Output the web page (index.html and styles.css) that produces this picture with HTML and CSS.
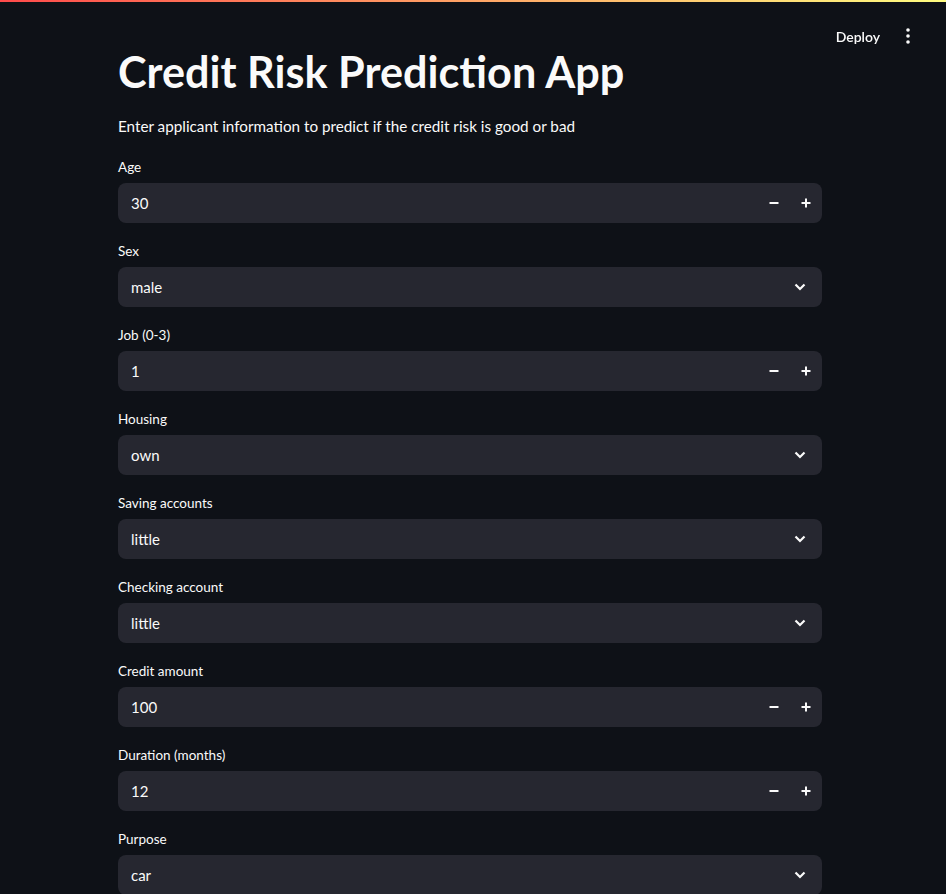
FILE: index.html
```html
<!DOCTYPE html>
<html>
<head>
<meta charset="utf-8">
<link rel="stylesheet" href="styles.css">
</head>
<body>
<div class="topbar"></div>
<header class="header">
  <span class="deploy">Deploy</span>
  <span class="kebab"><svg width="4" height="16" viewBox="0 0 4 16"><circle cx="2" cy="2" r="1.8" fill="#fafafa"/><circle cx="2" cy="8" r="1.8" fill="#fafafa"/><circle cx="2" cy="14" r="1.8" fill="#fafafa"/></svg></span>
</header>
<main class="main">
  <h1 class="title">Credit Risk Prediction App</h1>
  <p class="subtitle">Enter applicant information to predict if the credit risk is good or bad</p>

  <div class="field">
    <label class="label">Age</label>
    <div class="box"><span class="value">30</span><span class="steps"><span class="step"><svg width="10" height="10" viewBox="0 0 10 10"><path d="M0.5 5h9" stroke="#fafafa" stroke-width="2"/></svg></span><span class="step"><svg width="10" height="10" viewBox="0 0 10 10"><path d="M0.5 5h9M5 0.5v9" stroke="#fafafa" stroke-width="2"/></svg></span></span></div>
  </div>
  <div class="field">
    <label class="label">Sex</label>
    <div class="box"><span class="value">male</span><span class="chev"><svg width="12" height="8" viewBox="0 0 12 8"><path d="M1.5 1.5l4.5 4.5 4.5-4.5" stroke="#fafafa" stroke-width="2.2" fill="none"/></svg></span></div>
  </div>
  <div class="field">
    <label class="label">Job (0-3)</label>
    <div class="box"><span class="value">1</span><span class="steps"><span class="step"><svg width="10" height="10" viewBox="0 0 10 10"><path d="M0.5 5h9" stroke="#fafafa" stroke-width="2"/></svg></span><span class="step"><svg width="10" height="10" viewBox="0 0 10 10"><path d="M0.5 5h9M5 0.5v9" stroke="#fafafa" stroke-width="2"/></svg></span></span></div>
  </div>
  <div class="field">
    <label class="label">Housing</label>
    <div class="box"><span class="value">own</span><span class="chev"><svg width="12" height="8" viewBox="0 0 12 8"><path d="M1.5 1.5l4.5 4.5 4.5-4.5" stroke="#fafafa" stroke-width="2.2" fill="none"/></svg></span></div>
  </div>
  <div class="field">
    <label class="label">Saving accounts</label>
    <div class="box"><span class="value">little</span><span class="chev"><svg width="12" height="8" viewBox="0 0 12 8"><path d="M1.5 1.5l4.5 4.5 4.5-4.5" stroke="#fafafa" stroke-width="2.2" fill="none"/></svg></span></div>
  </div>
  <div class="field">
    <label class="label">Checking account</label>
    <div class="box"><span class="value">little</span><span class="chev"><svg width="12" height="8" viewBox="0 0 12 8"><path d="M1.5 1.5l4.5 4.5 4.5-4.5" stroke="#fafafa" stroke-width="2.2" fill="none"/></svg></span></div>
  </div>
  <div class="field">
    <label class="label">Credit amount</label>
    <div class="box"><span class="value">100</span><span class="steps"><span class="step"><svg width="10" height="10" viewBox="0 0 10 10"><path d="M0.5 5h9" stroke="#fafafa" stroke-width="2"/></svg></span><span class="step"><svg width="10" height="10" viewBox="0 0 10 10"><path d="M0.5 5h9M5 0.5v9" stroke="#fafafa" stroke-width="2"/></svg></span></span></div>
  </div>
  <div class="field">
    <label class="label">Duration (months)</label>
    <div class="box"><span class="value">12</span><span class="steps"><span class="step"><svg width="10" height="10" viewBox="0 0 10 10"><path d="M0.5 5h9" stroke="#fafafa" stroke-width="2"/></svg></span><span class="step"><svg width="10" height="10" viewBox="0 0 10 10"><path d="M0.5 5h9M5 0.5v9" stroke="#fafafa" stroke-width="2"/></svg></span></span></div>
  </div>
  <div class="field">
    <label class="label">Purpose</label>
    <div class="box"><span class="value">car</span><span class="chev"><svg width="12" height="8" viewBox="0 0 12 8"><path d="M1.5 1.5l4.5 4.5 4.5-4.5" stroke="#fafafa" stroke-width="2.2" fill="none"/></svg></span></div>
  </div>
</main>
</body>
</html>
```
FILE: styles.css
```css
html, body {
  margin: 0;
  padding: 0;
  background: #0e1117;
  color: #fafafa;
  font-family: Lato, "Open Sans", sans-serif;
  overflow: hidden;
  height: 894px;
}
.topbar {
  position: fixed;
  top: 0;
  left: 0;
  right: 0;
  height: 2px;
  background: linear-gradient(90deg, #ff4b4b, #fffd80);
}
.header {
  position: fixed;
  top: 0;
  right: 0;
  height: 72px;
  display: flex;
  align-items: center;
  padding-right: 36px;
  gap: 26px;
}
.deploy {
  font-size: 14px;
  font-weight: 600;
  color: #fafafa;
}
.kebab {
  display: flex;
  align-items: center;
}
.main {
  width: 704px;
  margin: 0 auto 0 118px;
  padding-top: 45px;
}
.title {
  margin: 0;
  font-size: 43.2px;
  font-weight: 700;
  line-height: 52px;
  letter-spacing: 0;
}
.subtitle {
  margin: 17px 0 16px;
  font-size: 15.25px;
  line-height: 25px;
}
.field {
  margin-bottom: 16px;
}
.label {
  display: flex;
  align-items: center;
  height: 24px;
  margin-bottom: 4px;
  font-size: 13.5px;
}
.box {
  height: 40px;
  background: #262730;
  border-radius: 8px;
  display: flex;
  align-items: center;
  justify-content: space-between;
  padding-left: 13px;
  box-sizing: border-box;
}
.value {
  font-size: 15px;
}
.steps {
  display: flex;
  height: 100%;
}
.step {
  width: 32px;
  display: flex;
  align-items: center;
  justify-content: center;
}
.chev {
  display: flex;
  align-items: center;
  margin-right: 16px;
}
```
